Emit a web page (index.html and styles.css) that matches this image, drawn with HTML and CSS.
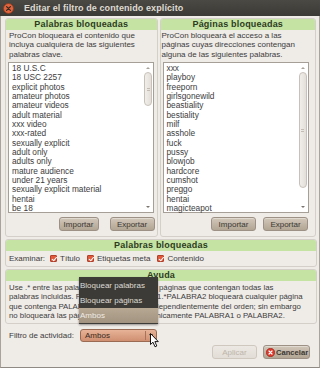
FILE: index.html
```html
<!DOCTYPE html>
<html>
<head>
<meta charset="utf-8">
<link rel="stylesheet" href="styles.css">
</head>
<body>
<div class="window">
  <div class="titlebar">
    <span class="close"><svg width="11" height="11" viewBox="0 0 11 11"><circle cx="5.5" cy="5.5" r="5" fill="#e0643e" stroke="#8a3a1e" stroke-width="0.8"/><path d="M3.6 3.6 L7.4 7.4 M7.4 3.6 L3.6 7.4" stroke="#3a2a22" stroke-width="1.3" stroke-linecap="round"/></svg></span>
    <span class="title">Editar el filtro de contenido explícito</span>
  </div>
  <div class="main">
    <div class="top-row">
      <div class="frame frame-left">
        <div class="frame-header">Palabras bloqueadas</div>
        <div class="desc desc-left">ProCon bloqueará el contenido que<br>incluya cualquiera de las siguientes<br>palabras clave.</div>
        <div class="list list-left">
          <div class="items">
            <div>18 U.S.C</div><div>18 USC 2257</div><div>explicit photos</div><div>amateur photos</div><div>amateur videos</div><div>adult material</div><div>xxx video</div><div>xxx-rated</div><div>sexually explicit</div><div>adult only</div><div>adults only</div><div>mature audience</div><div>under 21 years</div><div>sexually explicit material</div><div>hentai</div><div>be 18</div>
          </div>
          <div class="scrollbar">
            <span class="arrow up"></span>
            <div class="trough"><div class="slider slider-left"><span class="grip"></span></div></div>
            <span class="arrow down"></span>
          </div>
        </div>
        <div class="btn-row btn-row-left">
          <button class="btn btn-imp">Importar</button>
          <button class="btn btn-exp">Exportar</button>
        </div>
      </div>
      <div class="frame frame-right">
        <div class="frame-header">Páginas bloqueadas</div>
        <div class="desc desc-right">ProCon bloqueará el acceso a las<br>páginas cuyas direcciones contengan<br>alguna de las siguientes palabras.</div>
        <div class="list list-right">
          <div class="items">
            <div>xxx</div><div>playboy</div><div>freeporn</div><div>girlsgonewild</div><div>beastiality</div><div>bestiality</div><div>milf</div><div>asshole</div><div>fuck</div><div>pussy</div><div>blowjob</div><div>hardcore</div><div>cumshot</div><div>preggo</div><div>hentai</div><div>magicteapot</div>
          </div>
          <div class="scrollbar">
            <span class="arrow up"></span>
            <div class="trough"><div class="slider slider-right"><span class="grip"></span></div></div>
            <span class="arrow down"></span>
          </div>
        </div>
        <div class="btn-row btn-row-right">
          <button class="btn btn-imp2">Importar</button>
          <button class="btn btn-exp">Exportar</button>
        </div>
      </div>
    </div>
    <div class="frame frame-wide">
      <div class="frame-header">Palabras bloqueadas</div>
      <div class="check-row">
        <span class="lbl">Examinar:</span>
        <span class="check"><span class="box"></span>Título</span>
        <span class="check"><span class="box"></span>Etiquetas meta</span>
        <span class="check"><span class="box"></span>Contenido</span>
      </div>
    </div>
    <div class="frame frame-wide">
      <div class="frame-header">Ayuda</div>
      <div class="help">Use .* entre las palabras para bloquear las páginas que contengan todas las<br>palabras incluidas. Por ejemplo, PALABRA1.*PALABRA2 bloqueará cualquier página<br>que contenga PALABRA1 y PALABRA2 independientemente del orden; sin embargo<br>no bloqueará las páginas que contengan únicamente PALABRA1 o PALABRA2.</div>
    </div>
    <div class="filter-row">
      <span class="filter-lbl">Filtro de actividad:</span>
      <div class="combo"><span class="combo-text">Ambos</span><span class="combo-sep"></span><span class="combo-arrow"></span></div>
    </div>
    <div class="actions">
      <button class="btn btn-apply" disabled>Aplicar</button>
      <button class="btn btn-cancel"><span class="cancel-icon"><svg width="9" height="9" viewBox="0 0 9 9"><circle cx="4.5" cy="4.5" r="4.2" fill="#d9382c" stroke="#9a2018" stroke-width="0.6"/><path d="M3 3 L6 6 M6 3 L3 6" stroke="#fff" stroke-width="1.2" stroke-linecap="round"/></svg></span>Cancelar</button>
    </div>
  </div>
  <div class="menu">
    <div class="menu-item">Bloquear palabras</div>
    <div class="menu-item">Bloquear páginas</div>
    <div class="menu-item active">Ambos</div>
  </div>
  <svg class="cursor" width="10" height="15" viewBox="0 0 10 15"><path d="M0.5 0.5 L0.5 11.5 L3 9.2 L5 13.8 L6.8 13 L4.9 8.6 L8.3 8.6 Z" fill="#fff" stroke="#000" stroke-width="0.9" stroke-linejoin="round"/></svg>
</div>
</body>
</html>
```

FILE: styles.css
```css
* { box-sizing: border-box; }
html, body { margin: 0; padding: 0; }
body {
  width: 320px;
  height: 368px;
  overflow: hidden;
  font-family: "Liberation Sans", Arial, sans-serif;
  font-size: 8px;
  color: #3c3c3c;
  background: #efebe7;
}
.window {
  position: relative;
  width: 320px;
  height: 368px;
  background: #efebe7;
  border-left: 1px solid #a9a39b;
  border-right: 1px solid #a9a39b;
  border-bottom: 1px solid #8f8a83;
}
.titlebar {
  height: 16px;
  background: linear-gradient(#4a4944, #3b3a36);
  display: flex;
  align-items: center;
  margin: 0 -1px;
  padding-left: 3px;
}
.close { width: 11px; height: 11px; display: flex; }
.title {
  margin-left: 10px;
  font-weight: bold;
  font-size: 9px;
  color: #dfdbd2;
  letter-spacing: 0.1px;
}
.main {
  padding: 2px 3px 0 4px;
  display: flex;
  flex-direction: column;
}
.top-row {
  display: flex;
  gap: 2px;
}
.frame {
  border: 1px solid #d4cfc9;
  border-radius: 3px;
  display: flex;
  flex-direction: column;
}
.frame-left { width: 153px; height: 219px; }
.frame-right { width: 157px; height: 219px; }
.frame-header {
  height: 11px;
  line-height: 11px;
  background: #c5e4a3;
  text-align: center;
  font-weight: bold;
  font-size: 9px;
  color: #2d3b1e;
  border-radius: 2px 2px 0 0;
  letter-spacing: 0.2px;
}
.desc {
  line-height: 9.33px;
  padding-top: 1px;
  height: 32px;
  white-space: nowrap;
}
.desc-left { padding-left: 3px; }
.desc-right { padding-left: 1px; }
.list {
  height: 151px;
  background: #fff;
  border: 1px solid #a59f97;
  display: flex;
}
.list-left { margin-left: 2px; width: 146px; }
.list-right { margin-left: 2px; width: 146px; }
.items {
  flex: 1;
  padding-top: 1px;
  padding-left: 3px;
  line-height: 9.33px;
  font-size: 8.3px;
}
.scrollbar {
  width: 10px;
  display: flex;
  flex-direction: column;
  align-items: center;
  padding: 2px 1px;
}
.arrow {
  width: 0; height: 0;
  border-left: 2px solid transparent;
  border-right: 2px solid transparent;
}
.arrow.up { border-bottom: 2px solid #a8a29a; margin: 2px 0 3px; }
.arrow.down { border-top: 2px solid #7a756e; margin: 3px 0 2px; }
.trough { flex: 1; width: 8px; }
.slider {
  width: 8px;
  border: 1px solid #c7c1b9;
  border-radius: 4px;
  background: linear-gradient(90deg, #f1eeea, #e3ded8);
  display: flex;
  align-items: center;
  justify-content: center;
}
.slider-left { height: 34px; }
.slider-right { height: 116px; }
.grip {
  width: 3px; height: 3px;
  border-top: 1px solid #c2bcb4;
  border-bottom: 1px solid #c2bcb4;
}
.btn-row {
  display: flex;
  justify-content: flex-end;
  margin-top: 4px;
  gap: 11px;
}
.btn-row-left { padding-right: 2px; }
.btn-row-right { padding-right: 7px; gap: 7px; }
.btn {
  font-family: inherit;
  font-size: 8px;
  color: #3c3833;
  height: 14px;
  padding: 0;
  border: 1px solid #9c9184;
  border-radius: 3px;
  background: linear-gradient(#d1c7ba, #b2a593);
  box-shadow: inset 0 1px 0 rgba(255,255,255,0.35);
}
.btn-imp { width: 40px; }
.btn-imp2 { width: 45px; }
.btn-exp { width: 45px; }
.frame-wide { margin-top: 2px; width: 312px; }
.check-row {
  height: 15px;
  display: flex;
  align-items: center;
  padding-left: 3px;
}
.lbl { margin-right: 5px; }
.check { display: flex; align-items: center; margin-right: 7px; }
.box {
  width: 7px; height: 7px;
  border: 1px solid #b0402a;
  border-radius: 1px;
  background: #e25a3c;
  margin-right: 3px;
  position: relative;
}
.box::after {
  content: "";
  position: absolute;
  left: 1.5px; top: 0px;
  width: 2px; height: 3.5px;
  border-right: 1px solid #fff;
  border-bottom: 1px solid #fff;
  transform: rotate(40deg);
}
.help {
  line-height: 9.33px;
  padding: 2px 0 3px 3px;
  white-space: nowrap;
  font-size: 7.8px;
}
.filter-row {
  display: flex;
  align-items: center;
  margin-top: 5px;
  height: 13px;
}
.filter-lbl { padding-left: 4px; width: 75px; }
.combo {
  width: 77px;
  height: 13px;
  border: 1px solid #9b6a53;
  border-radius: 3px;
  background: linear-gradient(#e7b398, #cf8f70);
  display: flex;
  align-items: center;
  padding-left: 4px;
}
.combo-text { flex: 1; color: #3a2a22; }
.combo-sep { width: 1px; height: 9px; background: #a8735a; margin-right: 3px; }
.combo-arrow {
  width: 0; height: 0;
  border-left: 2.5px solid transparent;
  border-right: 2.5px solid transparent;
  border-top: 3px solid #3a2a22;
  margin-right: 3px;
}
.actions {
  display: flex;
  justify-content: flex-end;
  gap: 6px;
  margin-top: 3px;
  padding-right: 6px;
}
.btn-apply {
  width: 45px;
  color: #bdb5aa;
  background: linear-gradient(#ece8e3, #e2ddd6);
  border-color: #cfc8bf;
  box-shadow: none;
}
.btn-cancel {
  width: 47px;
  display: flex;
  align-items: center;
  padding-left: 2px;
  font-weight: bold;
  font-size: 7.6px;
}
.cancel-icon { display: flex; margin-right: 1px; }
.menu {
  position: absolute;
  left: 78px;
  top: 277px;
  width: 79px;
  padding: 1px 0;
  background: #3c3b37;
  box-shadow: 0 1px 2px rgba(0,0,0,0.4);
}
.menu-item {
  height: 15px;
  line-height: 15px;
  padding-left: 1px;
  color: #dfdbd2;
}
.menu-item.active {
  background: linear-gradient(#b6a893, #a29380);
  color: #f0ebe4;
}
.cursor {
  position: absolute;
  left: 149px;
  top: 333px;
}
```
